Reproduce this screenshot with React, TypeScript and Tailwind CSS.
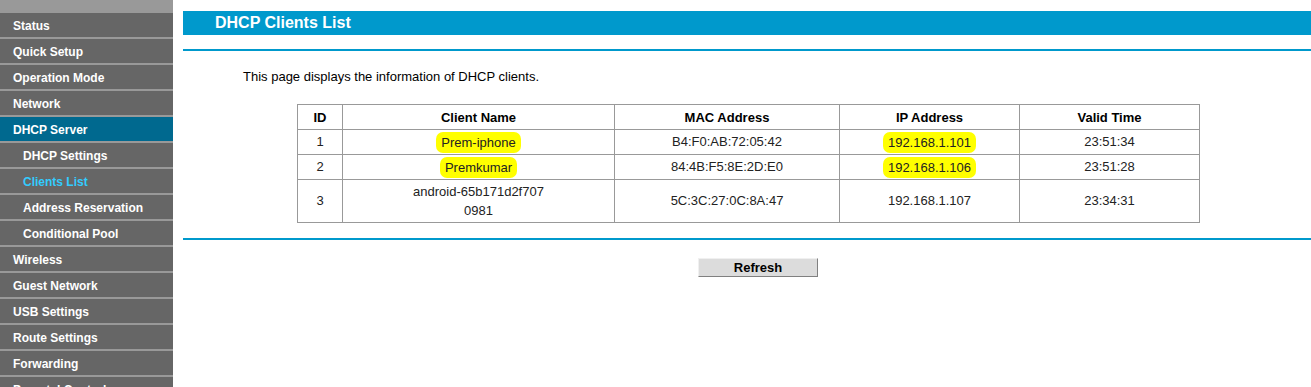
import React from 'react';

const menu = [
  { label: 'Status' },
  { label: 'Quick Setup' },
  { label: 'Operation Mode' },
  { label: 'Network' },
  { label: 'DHCP Server', active: true },
  { label: 'DHCP Settings', sub: true },
  { label: 'Clients List', sub: true, current: true },
  { label: 'Address Reservation', sub: true },
  { label: 'Conditional Pool', sub: true },
  { label: 'Wireless' },
  { label: 'Guest Network' },
  { label: 'USB Settings' },
  { label: 'Route Settings' },
  { label: 'Forwarding' },
  { label: 'Parental Control' },
];

const clients = [
  { id: 1, name: 'Prem-iphone', mac: 'B4:F0:AB:72:05:42', ip: '192.168.1.101', time: '23:51:34', marked: true },
  { id: 2, name: 'Premkumar', mac: '84:4B:F5:8E:2D:E0', ip: '192.168.1.106', time: '23:51:28', marked: true },
  { id: 3, name: 'android-65b171d2f707\n0981', mac: '5C:3C:27:0C:8A:47', ip: '192.168.1.107', time: '23:34:31' },
];

function Marker({ children }: { children: React.ReactNode }) {
  // yellow highlighter stroke over the text
  return (
    <span className="inline-block rounded-[7px] bg-[#ffff00] px-[5px] py-[3px] leading-[15px]">{children}</span>
  );
}

function Sidebar() {
  return (
    <div className="w-[173px] shrink-0 bg-[#999999] pt-[13px]">
      {menu.map((m) => (
        <div
          key={m.label}
          className={
            'flex h-[26px] items-center border-b-2 border-[#999999] pt-[2px] text-[12px] font-bold ' +
            (m.active ? 'bg-[#00698f] ' : 'bg-[#666666] ') +
            (m.sub ? 'pl-[23px] ' : 'pl-[13px] ') +
            (m.current ? 'text-[#33ccff]' : 'text-white')
          }
        >
          {m.label}
        </div>
      ))}
    </div>
  );
}

export default function App() {
  const th = 'border border-[#999999] text-center text-[13px] font-bold text-black';
  const td = 'border border-[#999999] text-center text-[13px] text-[#222222]';

  return (
    <div className="flex h-[387px] overflow-hidden bg-white font-['Liberation_Sans',Arial,sans-serif]">
      <Sidebar />
      <div className="ml-[10px] flex-1 pt-[11px]">
        <div className="flex h-[24px] items-center bg-[#0099cc] pl-[32px] text-[16px] font-bold text-white">
          DHCP Clients List
        </div>
        <div className="mt-[14px] h-[2px] bg-[#0099cc]" />

        <p className="ml-[60px] mt-[18px] text-[13px] leading-[16px] text-black">
          This page displays the information of DHCP clients.
        </p>

        <table className="ml-[114px] mt-[19px] w-[903px] border-collapse">
          <thead>
            <tr className="h-[25px]">
              <th className={th + ' w-[45px] pt-[1px]'}>ID</th>
              <th className={th + ' w-[272px] pt-[1px]'}>Client Name</th>
              <th className={th + ' w-[225px] pt-[1px]'}>MAC Address</th>
              <th className={th + ' w-[180px] pt-[1px]'}>IP Address</th>
              <th className={th + ' pt-[1px]'}>Valid Time</th>
            </tr>
          </thead>
          <tbody>
            {clients.map((c) => (
              <tr key={c.id} className={c.id === 3 ? 'h-[43px]' : 'h-[25px]'}>
                <td className={td}>{c.id}</td>
                <td className={td + ' leading-[19px] whitespace-pre-line'}>
                  {c.marked ? <Marker>{c.name}</Marker> : c.name}
                </td>
                <td className={td}>{c.mac}</td>
                <td className={td}>{c.marked ? <Marker>{c.ip}</Marker> : c.ip}</td>
                <td className={td}>{c.time}</td>
              </tr>
            ))}
          </tbody>
        </table>

        <div className="mt-[15px] h-[2px] bg-[#0099cc]" />

        <div className="mt-[18px] flex pl-[515px]">
          <button className="h-[19px] w-[120px] border border-b-[#808080] border-l-[#f0f0f0] border-r-[#808080] border-t-[#f0f0f0] bg-[#dcdcdc] text-[13px] font-bold leading-[16px] text-black">
            Refresh
          </button>
        </div>
      </div>
    </div>
  );
}
